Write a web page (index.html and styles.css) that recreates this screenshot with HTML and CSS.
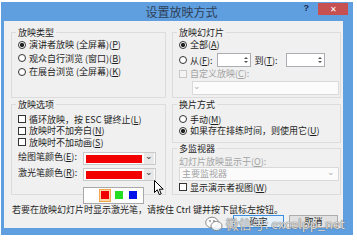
FILE: index.html
```html
<!DOCTYPE html>
<html lang="zh-CN">
<head>
    <meta charset="UTF-8">
    <title>设置放映方式</title>
    <link rel="stylesheet" href="styles.css">
</head>
<body>

    <div class="window">

        <div class="titlebar">
            <span></span>
            <span class="title">设置放映方式</span>
            <div class="caption">
                <span class="help">?</span>
                <span class="close">&#x2715;</span>
            </div>
        </div>

        <div class="client">
            <div class="groups">

                <fieldset class="group">
                    <legend>放映类型</legend>
                    <div class="opt"><span class="radio on"></span>演讲者放映 (全屏幕)(<u>P</u>)</div>
                    <div class="opt"><span class="radio"></span>观众自行浏览 (窗口)(<u>B</u>)</div>
                    <div class="opt"><span class="radio"></span>在展台浏览 (全屏幕)(<u>K</u>)</div>
                </fieldset>

                <fieldset class="group">
                    <legend>放映幻灯片</legend>
                    <div class="opt"><span class="radio on"></span>全部(<u>A</u>)</div>
                    <div class="opt range">
                        <span class="radio"></span>从(<u>F</u>):
                        <span class="spin"><span class="arrows"><i class="up"></i><i class="down"></i></span></span>
                        到(<u>T</u>):
                        <span class="spin last"><span class="arrows"><i class="up"></i><i class="down"></i></span></span>
                    </div>
                    <div class="opt disabled"><span class="check"></span>自定义放映(<u>C</u>):</div>
                    <div class="combo off indent"><span class="chev">&#x2304;</span></div>
                </fieldset>

                <fieldset class="group options">
                    <legend>放映选项</legend>
                    <div class="opt tight first"><span class="check"></span>循环放映，按 ESC 键终止(<u>L</u>)</div>
                    <div class="opt tight"><span class="check"></span>放映时不加旁白(<u>N</u>)</div>
                    <div class="opt tight"><span class="check"></span>放映时不加动画(<u>S</u>)</div>
                    <div class="color-row">
                        <span class="color-label">绘图笔颜色(<u>E</u>):</span>
                        <div class="combo color"><span class="swatch"></span><span class="drop">&#x2304;</span></div>
                    </div>
                    <div class="color-row">
                        <span class="color-label">激光笔颜色(<u>R</u>):</span>
                        <div class="combo color"><span class="swatch"></span><span class="drop">&#x2304;</span></div>
                    </div>

                    <div class="palette">
                        <span class="cell picked"><span class="red"></span></span>
                        <span class="cell"><span class="green"></span></span>
                        <span class="cell"><span class="blue"></span></span>
                    </div>

                    <svg class="cursor" width="11" height="16" viewBox="0 0 11 16">
                        <path d="M0.5 0.5 L0.5 12.5 L3.3 9.8 L5.3 14.6 L7.2 13.8 L5.3 9.2 L9.2 9.2 Z" fill="#fff" stroke="#000" stroke-width="1"/>
                    </svg>
                </fieldset>

                <div class="right-col">
                    <fieldset class="group">
                        <legend>换片方式</legend>
                        <div class="opt tight first"><span class="radio"></span>手动(<u>M</u>)</div>
                        <div class="opt tight"><span class="radio on"></span>如果存在排练时间，则使用它(<u>U</u>)</div>
                    </fieldset>
                    <fieldset class="group grow">
                        <legend>多监视器</legend>
                        <div class="opt disabled small">幻灯片放映显示于(<u>O</u>):</div>
                        <div class="combo off"><span class="value">主要监视器</span><span class="chev">&#x2304;</span></div>
                        <div class="opt"><span class="check"></span>显示演示者视图(<u>W</u>)</div>
                    </fieldset>
                </div>

            </div>

            <p class="hint">若要在放映幻灯片时显示激光笔，请按住 Ctrl 键并按下鼠标左按钮。</p>

            <div class="actions">
                <button class="btn default">确定</button>
                <button class="btn">取消</button>
            </div>
        </div>

        <div class="watermark">
            <svg width="18" height="16" viewBox="0 0 18 16">
                <ellipse cx="7" cy="6.5" rx="6.3" ry="5.3" fill="rgba(255,255,255,0.7)" stroke="#8a8a8a" stroke-width="1"/>
                <ellipse cx="11.5" cy="10" rx="5.5" ry="4.6" fill="rgba(255,255,255,0.8)" stroke="#8a8a8a" stroke-width="1"/>
                <circle cx="5" cy="5" r="0.9" fill="#8a8a8a"/>
                <circle cx="9" cy="5" r="0.9" fill="#8a8a8a"/>
            </svg>
            <span>微信号: excelpp_net</span>
        </div>
    </div>

</body>
</html>
```

FILE: styles.css
```css
* {
    box-sizing: border-box;
}

body {
    margin: 0;
    background-color: #fff;
    font-family: "Noto Sans CJK SC", "Liberation Sans", sans-serif;
    font-size: 9px;
    color: #1e1e1e;
}

u {
    text-decoration: underline;
}

.window {
    position: relative;
    width: 352px;
    height: 233px;
    margin: 2px 0 0 1px;
    padding: 0 10px 7px 3px;
    background-color: #5f9edf;
    display: flex;
    flex-direction: column;
}

.titlebar {
    height: 19px;
    display: grid;
    grid-template-columns: 1fr auto 1fr;
    align-items: start;
    margin-right: -10px;
}

.title {
    font-size: 12px;
    line-height: 19px;
    color: #2e4157;
    padding-left: 6px;
}

.caption {
    justify-self: end;
    display: flex;
    align-items: start;
    margin-right: 5px;
}

.help {
    font-family: "Liberation Sans", sans-serif;
    font-weight: bold;
    font-size: 9px;
    line-height: 13px;
    color: #1f2c4d;
    margin-right: 9px;
}

.close {
    width: 30px;
    height: 12px;
    margin-top: 1px;
    background-color: #c75050;
    color: #fff;
    font-size: 8px;
    line-height: 12px;
    text-align: center;
}

.client {
    flex: 1;
    background-color: #f0f0f0;
    padding: 6px 2px 0 7px;
    display: flex;
    flex-direction: column;
}

.groups {
    display: grid;
    grid-template-columns: 155px 169px;
    column-gap: 6px;
    row-gap: 1px;
}

.group {
    position: relative;
    margin: 0;
    padding: 0 4px 2px 6px;
    border: 1px solid #dcdcdc;
    min-width: 0;
}

.group legend {
    padding: 0 2px;
    margin-left: -2px;
    line-height: 11px;
}

.opt {
    display: flex;
    align-items: center;
    height: 13.5px;
    white-space: nowrap;
}

.opt.tight {
    height: 11.5px;
}

.opt.first {
    margin-top: 4px;
}

.radio,
.check {
    width: 8px;
    height: 8px;
    border: 1px solid #333;
    background-color: #fff;
    margin-right: 3px;
    flex: none;
}

.radio {
    border-radius: 50%;
}

.radio.on {
    background: radial-gradient(circle, #222 0 1.8px, #fff 2.4px);
}

.disabled {
    color: #a3a3a3;
}

.disabled .check {
    border-color: #c8c8c8;
    background-color: #f4f4f4;
}

.range {
    height: 15px;
    margin-top: 1px;
}

.spin {
    width: 34px;
    height: 14px;
    border: 1px solid #abadb3;
    background-color: #fff;
    margin: 0 4px;
    display: flex;
    justify-content: flex-end;
}

.spin.last {
    width: 39px;
    margin-left: 8px;
    margin-right: 0;
}

.arrows {
    width: 7px;
    display: flex;
    flex-direction: column;
    justify-content: center;
    align-items: center;
    gap: 2px;
}

.arrows i {
    width: 0;
    height: 0;
    border-left: 2px solid transparent;
    border-right: 2px solid transparent;
}

.arrows .up {
    border-bottom: 2px solid #555;
}

.arrows .down {
    border-top: 2px solid #555;
}

.opt.disabled {
    height: 12px;
}

.combo {
    height: 14px;
    border: 1px solid #d9d9d9;
    background-color: #fbfbfb;
    display: flex;
    align-items: center;
    justify-content: space-between;
    color: #a3a3a3;
}

.combo.indent {
    margin: 1px 0 0 13px;
    width: 147px;
}

.chev {
    font-size: 9px;
    line-height: 6px;
    height: 9px;
    padding-right: 3px;
    color: #b0b0b0;
}

.value {
    padding-left: 2px;
}

.options .color-row {
    display: flex;
    align-items: flex-start;
    gap: 8px;
    margin-top: 4px;
}

.options .color-row + .color-row {
    margin-top: 3px;
}

.color-label {
    line-height: 9px;
    width: 57px;
    white-space: nowrap;
}

.combo.color {
    width: 73px;
    height: 13px;
    border-color: #c9c9c9;
    background-color: #fff;
    padding: 1px;
}

.swatch {
    flex: 1;
    height: 8px;
    margin: 0 2px 0 1px;
    background-color: #f20000;
}

.drop {
    width: 10px;
    height: 11px;
    background-color: #e8e8e8;
    color: #333;
    font-size: 9px;
    line-height: 6px;
    text-align: center;
}

.palette {
    position: absolute;
    left: 71px;
    top: 77px;
    width: 61px;
    height: 17px;
    border: 1px solid #a9a9a9;
    background-color: #fff;
    display: flex;
    justify-content: flex-end;
    align-items: center;
    gap: 2px;
    padding-right: 4px;
}

.cell {
    width: 12px;
    height: 13px;
    display: flex;
    align-items: center;
    justify-content: center;
}

.cell.picked {
    background-color: #fbd9a8;
    border: 1px solid #f3a74e;
}

.cell span {
    width: 8px;
    height: 8px;
}

.red { background-color: #f00000; }
.green { background-color: #22dd22; }
.blue { background-color: #0010e8; }

.cursor {
    position: absolute;
    left: 142px;
    top: 70px;
}

.right-col {
    display: flex;
    flex-direction: column;
}

.right-col .group {
    padding-bottom: 5px;
}

.right-col .grow {
    flex: 1;
    padding-bottom: 0;
}

.opt.small {
    height: 11px;
    margin-top: 2px;
}

.grow .combo {
    width: 160px;
}

.hint {
    margin: 10px 0 0 1px;
    line-height: 10px;
    white-space: nowrap;
}

.actions {
    display: flex;
    justify-content: flex-end;
    gap: 5px;
    margin-right: 3px;
}

.btn {
    width: 49px;
    height: 13px;
    padding: 0;
    border: 1px solid #adadad;
    background-color: #e1e1e1;
    font-family: inherit;
    font-size: 9px;
    line-height: 11px;
    color: #1e1e1e;
}

.btn.default {
    width: 51px;
    border-color: #3c8ee0;
    background-color: #e5f1fb;
}

.watermark {
    position: absolute;
    right: 8px;
    bottom: 2px;
    display: flex;
    align-items: center;
    gap: 3px;
    font-size: 13px;
    color: rgba(255, 255, 255, 0.75);
    text-shadow: 0 0 1px #6a6a6a, 0 0 1px #6a6a6a;
    white-space: nowrap;
}
```
